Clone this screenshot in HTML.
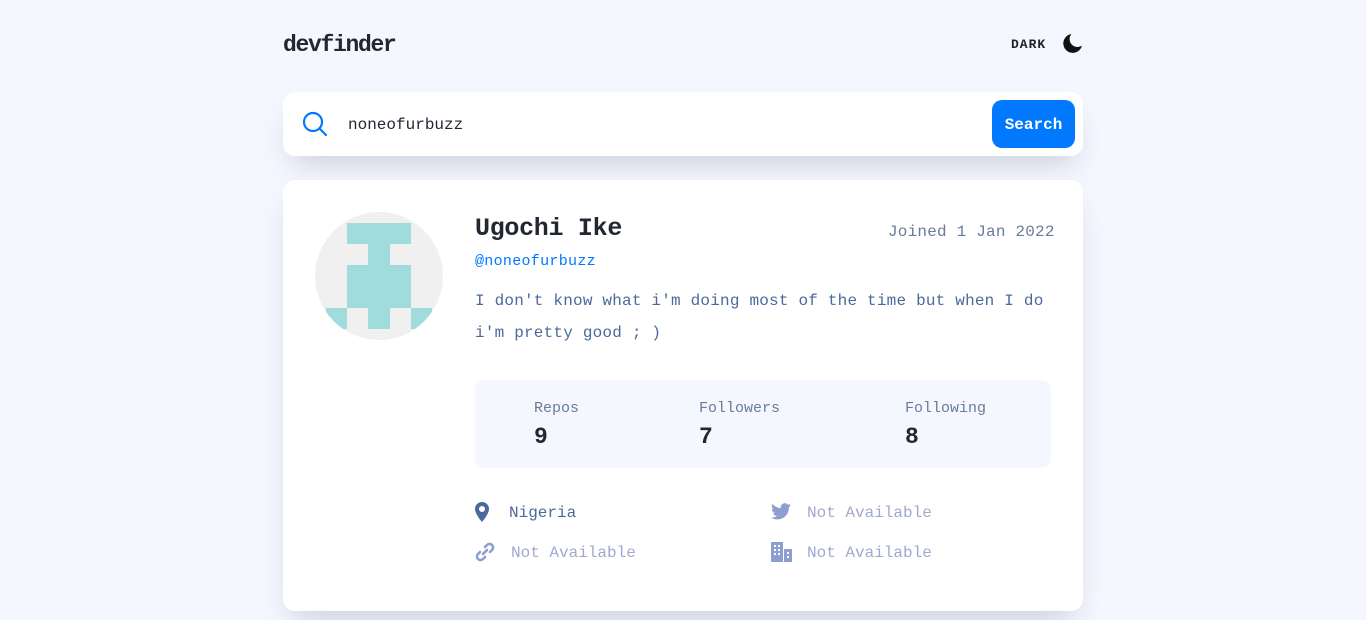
<!DOCTYPE html>
<html><head><meta charset="utf-8"><style>
*{margin:0;padding:0;box-sizing:border-box}
body{width:1366px;height:620px;background:#f4f7fe;font-family:"Liberation Mono",monospace;overflow:hidden;position:relative}
.abs{position:absolute}
.logo{left:283px;top:32px;font-size:23px;font-weight:bold;color:#222731;letter-spacing:-1.3px}
.dark{left:1011px;top:37px;font-size:13px;font-weight:bold;letter-spacing:1px;color:#222}
.search{left:283px;top:92px;width:800px;height:64px;background:#fff;border-radius:12px;box-shadow:0 16px 30px -10px rgba(40,50,90,0.22)}
.btn{left:992px;top:100px;width:83px;height:48px;background:#0079ff;border-radius:10px;color:#fff;font-size:16px;font-weight:bold;text-align:center;line-height:50px}
.card{left:283px;top:180px;width:800px;height:431px;background:#fff;border-radius:12px;box-shadow:0 16px 30px -10px rgba(40,50,90,0.22)}
.stats{left:475px;top:380px;width:576px;height:88px;background:#f4f7fe;border-radius:10px}
.lbl{font-size:15px;color:#697c9a}
.num{font-size:23px;font-weight:bold;color:#222731}
.info{font-size:16px;color:#a0a8cf}
</style></head><body>
<div class="abs logo">devfinder</div>
<div class="abs dark">DARK</div>
<svg class="abs" style="left:1062px;top:33px" width="21" height="21" viewBox="0 0 20 20"><path d="M9 1A9 9 0 1 0 19 12 7.5 7.5 0 0 1 9 1Z" fill="#111"/></svg>
<div class="abs search"></div>
<svg class="abs" style="left:302px;top:111px" width="26" height="26" viewBox="0 0 26 26" fill="none" stroke="#0079ff" stroke-width="2.2"><circle cx="11" cy="11" r="9"/><path d="M17.5 17.5L24 24" stroke-linecap="round"/></svg>
<div class="abs" style="left:348px;top:116px;font-size:16px;color:#222731">noneofurbuzz</div>
<div class="abs btn">Search</div>
<div class="abs card"></div>
<div class="abs" style="left:315px;top:212px;width:128px;height:128px;border-radius:50%;background:#f0f0f0;overflow:hidden">
<svg width="128" height="128"><g fill="#a0dcdc">
<rect x="32" y="11" width="64" height="21"/><rect x="53" y="32" width="22" height="21"/><rect x="32" y="53" width="64" height="43"/>
<rect x="11" y="96" width="21" height="21"/><rect x="53" y="96" width="22" height="21"/><rect x="96" y="96" width="21" height="21"/>
</g></svg></div>
<div class="abs" style="left:475px;top:214px;font-size:25px;font-weight:bold;color:#222731;letter-spacing:-0.3px">Ugochi Ike</div>
<div class="abs" style="left:888px;top:223px;font-size:16px;color:#697c9a;letter-spacing:0.2px">Joined 1 Jan 2022</div>
<div class="abs" style="left:475px;top:253px;font-size:15px;color:#0079ff;letter-spacing:0.3px">@noneofurbuzz</div>
<div class="abs" style="left:475px;top:285px;width:600px;font-size:16px;line-height:32px;color:#4b6a9b;letter-spacing:0.2px">I don't know what i'm doing most of the time but when I do<br>i'm pretty good ; )</div>
<div class="abs stats"></div>
<div class="abs lbl" style="left:534px;top:400px">Repos</div>
<div class="abs lbl" style="left:699px;top:400px">Followers</div>
<div class="abs lbl" style="left:905px;top:400px">Following</div>
<div class="abs num" style="left:534px;top:424px">9</div>
<div class="abs num" style="left:699px;top:424px">7</div>
<div class="abs num" style="left:905px;top:424px">8</div>
<svg class="abs" style="left:475px;top:502px" width="14" height="20" viewBox="0 0 14 20"><path d="M7 0A7 7 0 0 0 0 7C0 12 7 20 7 20S14 12 14 7A7 7 0 0 0 7 0ZM7 10A3 3 0 1 1 7 4 3 3 0 0 1 7 10Z" fill="#4b6a9b"/></svg>
<div class="abs info" style="left:509px;top:504px;color:#4b6a9b">Nigeria</div>
<svg class="abs" style="left:475px;top:542px" width="20" height="20" viewBox="0 0 20 20" fill="none" stroke="#8d9fd0" stroke-width="2.6" stroke-linecap="round"><path d="M8 12L12 8"/><path d="M10 5l2-2a3.5 3.5 0 0 1 5 5l-2 2"/><path d="M10 15l-2 2a3.5 3.5 0 0 1-5-5l2-2"/></svg>
<div class="abs info" style="left:511px;top:544px">Not Available</div>
<svg class="abs" style="left:771px;top:503px" width="20" height="17" viewBox="0 0 24 20"><path d="M24 2.4a10 10 0 0 1-2.8.8A5 5 0 0 0 23.3.5a10 10 0 0 1-3.1 1.2A4.9 4.9 0 0 0 11.8 6 14 14 0 0 1 1.7.9a4.9 4.9 0 0 0 1.5 6.6A4.9 4.9 0 0 1 1 6.9a4.9 4.9 0 0 0 3.9 4.9 5 5 0 0 1-2.2.1 4.9 4.9 0 0 0 4.6 3.4A9.9 9.9 0 0 1 0 17.3 14 14 0 0 0 7.5 19.5c9.1 0 14-7.5 14-14v-.6A10 10 0 0 0 24 2.4Z" fill="#8d9fd0"/></svg>
<div class="abs info" style="left:807px;top:504px">Not Available</div>
<svg class="abs" style="left:771px;top:542px" width="21" height="20" viewBox="0 0 21 20"><path d="M0 0H12V20H0ZM13 7H21V20H13Z" fill="#8d9fd0"/><g fill="#fff"><rect x="3" y="3" width="2" height="2"/><rect x="7" y="3" width="2" height="2"/><rect x="3" y="7" width="2" height="2"/><rect x="7" y="7" width="2" height="2"/><rect x="3" y="11" width="2" height="2"/><rect x="7" y="11" width="2" height="2"/><rect x="16" y="10" width="2" height="2"/><rect x="16" y="14" width="2" height="2"/></g></svg>
<div class="abs info" style="left:807px;top:544px">Not Available</div>
</body></html>
